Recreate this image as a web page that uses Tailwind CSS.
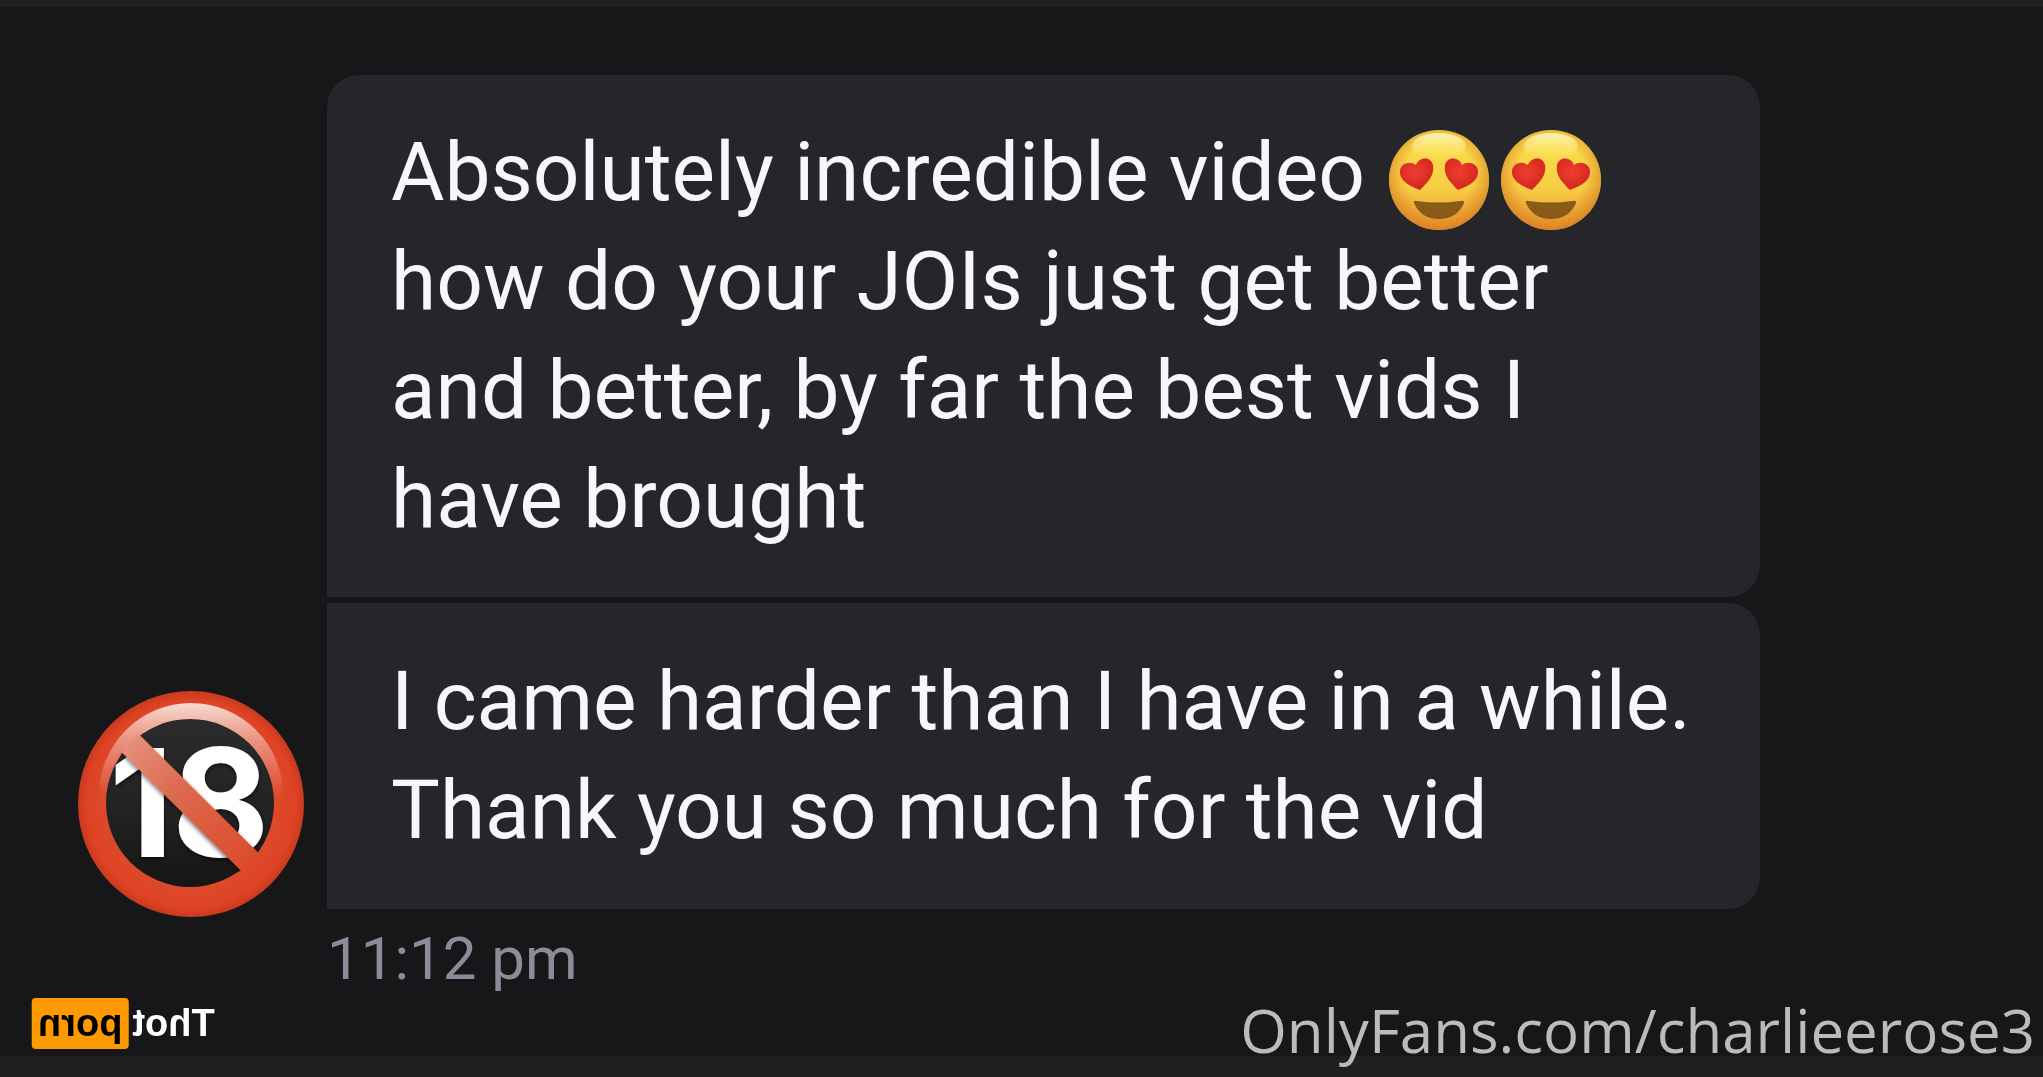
<!DOCTYPE html>
<html lang="en">
<head>
    <meta charset="UTF-8">
    <meta name="viewport" content="width=device-width, initial-scale=1.0">
    <title>Messages</title>
    <script src="https://cdn.jsdelivr.net/npm/@tailwindcss/browser@4"></script>
</head>
<body class="bg-[#171719] font-['Roboto',sans-serif]">
    <!-- shared emoji artwork -->
    <svg class="absolute w-0 h-0" aria-hidden="true">
        <defs>
            <linearGradient id="face" x1="0" y1="0" x2="0" y2="1">
                <stop offset="0" stop-color="#fbe04e" />
                <stop offset="0.55" stop-color="#f8cf45" />
                <stop offset="1" stop-color="#eb9c33" />
            </linearGradient>
            <radialGradient id="rim" cx="0.5" cy="0.45" r="0.56">
                <stop offset="0.6" stop-color="#e08a25" stop-opacity="0" />
                <stop offset="1" stop-color="#d67c22" stop-opacity="0.85" />
            </radialGradient>
            <linearGradient id="shine" x1="0" y1="0" x2="0" y2="1">
                <stop offset="0" stop-color="#fff8c9" stop-opacity="0.9" />
                <stop offset="1" stop-color="#fff27a" stop-opacity="0" />
            </linearGradient>
            <radialGradient id="heart" cx="0.45" cy="0.4" r="0.6">
                <stop offset="0" stop-color="#ee3f30" />
                <stop offset="1" stop-color="#d3261f" />
            </radialGradient>
            <symbol id="heart-eyes" viewBox="0 0 100 100">
                <circle cx="50" cy="50" r="50" fill="url(#face)" />
                <circle cx="50" cy="50" r="50" fill="url(#rim)" />
                <ellipse cx="50" cy="16" rx="27" ry="13" fill="url(#shine)" />
                <path d="M31 60 C24 57 12 53 11 43 C10 34 20 30 27 35 C29 28 41 25 44 35 C46 46 37 54 31 60Z" fill="url(#heart)" />
                <path d="M69 60 C76 57 88 53 89 43 C90 34 80 30 73 35 C71 28 59 25 56 35 C54 46 63 54 69 60Z" fill="url(#heart)" />
                <path d="M25 73 Q24 70 28 71 Q50 74 71 71 Q76 70 75 73 Q68 89 50 89 Q32 89 25 73Z" fill="#8a5a17" />
            </symbol>
        </defs>
    </svg>

    <div class="relative min-h-screen flex flex-col border-t-[7px] border-[#202020]">
        <main class="pt-[68px]">
            <div class="flex items-end gap-[23px] pl-[78px] pr-[283px]">
                <svg class="w-[226px] h-[226px] shrink-0 -mb-2" viewBox="0 0 226 226" role="img" aria-label="No one under eighteen">
                    <defs>
                        <radialGradient id="ring" cx="0.5" cy="0.5" r="0.5">
                            <stop offset="0.75" stop-color="#dc4a2b" />
                            <stop offset="0.92" stop-color="#de4324" />
                            <stop offset="1" stop-color="#c93a1e" />
                        </radialGradient>
                        <linearGradient id="gloss" gradientUnits="userSpaceOnUse" x1="0" y1="12" x2="0" y2="105">
                            <stop offset="0" stop-color="#fff" stop-opacity="0.8" />
                            <stop offset="0.35" stop-color="#fff" stop-opacity="0.45" />
                            <stop offset="1" stop-color="#fff" stop-opacity="0" />
                        </linearGradient>
                        <linearGradient id="disc" x1="0" y1="0" x2="0" y2="1">
                            <stop offset="0" stop-color="#2b2b2b" />
                            <stop offset="0.55" stop-color="#232323" />
                            <stop offset="1" stop-color="#151515" />
                        </linearGradient>
                        <linearGradient id="slash" gradientUnits="userSpaceOnUse" x1="45" y1="45" x2="175" y2="175">
                            <stop offset="0" stop-color="#e79583" />
                            <stop offset="0.4" stop-color="#dd6a50" />
                            <stop offset="1" stop-color="#dc4a2b" />
                        </linearGradient>
                        <filter id="drop" x="-10%" y="-10%" width="120%" height="120%">
                            <feDropShadow dx="0" dy="2" stdDeviation="2" flood-color="#000" flood-opacity="0.6" />
                        </filter>
                        <clipPath id="inner">
                            <circle cx="112" cy="112" r="85" />
                        </clipPath>
                    </defs>
                    <circle cx="113" cy="113" r="113" fill="url(#ring)" />
                    <circle cx="113" cy="104" r="92" fill="url(#gloss)" />
                    <circle cx="112" cy="112" r="84" fill="url(#disc)" />
                    <g filter="url(#drop)" fill="#fff" font-family="Inter, sans-serif" font-weight="700" font-size="150">
                        <text x="31" y="166">1</text>
                        <text x="94" y="166">8</text>
                    </g>
                    <g clip-path="url(#inner)">
                        <path d="M40 40L186 185" stroke="url(#slash)" stroke-width="25" filter="url(#drop)" />
                    </g>
                </svg>
                <div class="flex-1 flex flex-col gap-[6px] text-[82px] leading-[109px] text-[#f7f7fa] whitespace-nowrap">
                    <p class="bg-[#252629] rounded-r-[32px] rounded-tl-[32px] px-16 py-[43px]">Absolutely incredible video <span class="inline-flex gap-3 align-top pt-3 ml-1" role="img" aria-label="heart eyes, heart eyes"><svg class="w-[100px] h-[100px] -mb-3"><use href="#heart-eyes" /></svg><svg class="w-[100px] h-[100px] -mb-3"><use href="#heart-eyes" /></svg></span><br>how do your JOIs just get better<br>and better, by far the best vids I<br>have brought</p>
                    <p class="bg-[#252629] rounded-r-[32px] px-16 py-11">I came harder than I have in a while.<br>Thank you so much for the vid</p>
                </div>
            </div>
            <time class="block pl-[327px] pt-5 text-[60px] leading-[60px] text-[#8a8d99]">11:12 pm</time>
        </main>

        <div class="absolute inset-x-0 bottom-0 h-[21px] bg-[#202020]"></div>
        <footer class="relative mt-auto flex items-end justify-between pl-8 pr-2">
            <div class="-scale-x-100 mb-7 flex items-center gap-1 font-['Liberation_Sans',sans-serif] font-bold text-[38px] leading-[51px] text-white">
                <span>Thot</span>
                <span class="bg-[#ff9900] text-black rounded-[4px] px-[6px]">porn</span>
            </div>
            <a href="#" class="mb-[7px] font-['Open_Sans',sans-serif] text-[60px] leading-[80px] text-[#bbbbbb]">OnlyFans.com/charlieerose3</a>
        </footer>
    </div>
</body>
</html>
